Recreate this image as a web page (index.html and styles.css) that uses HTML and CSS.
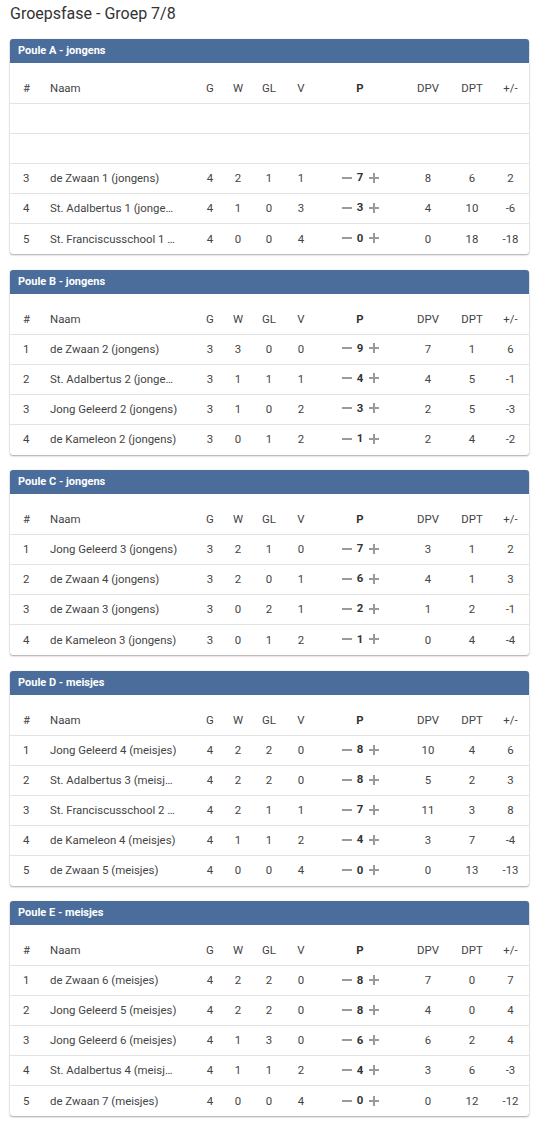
FILE: index.html
```html
<!DOCTYPE html>
<html lang="nl">
<head>
<meta charset="utf-8">
<title>Groepsfase - Groep 7/8</title>
<link rel="stylesheet" href="styles.css">
</head>
<body>
<h1 class="title">Groepsfase - Groep 7/8</h1>

<section class="card">
  <div class="card-head">Poule A - jongens</div>
  <table class="standings">
    <colgroup><col class="c-rank"><col class="c-name"><col class="c-g"><col class="c-w"><col class="c-gl"><col class="c-v"><col class="c-p"><col class="c-dpv"><col class="c-dpt"><col class="c-diff"></colgroup>
    <thead><tr><th class="rank">#</th><th class="name">Naam</th><th>G</th><th>W</th><th>GL</th><th>V</th><th class="pts">P</th><th>DPV</th><th>DPT</th><th>+/-</th></tr></thead>
    <tbody>
      <tr><td class="rank"></td><td class="name"></td><td></td><td></td><td></td><td></td><td></td><td></td><td></td><td></td></tr>
      <tr><td class="rank"></td><td class="name"></td><td></td><td></td><td></td><td></td><td></td><td></td><td></td><td></td></tr>
      <tr><td class="rank">3</td><td class="name">de Zwaan 1 (jongens)</td><td>4</td><td>2</td><td>1</td><td>1</td><td><span class="pbox"><span class="minus"></span><b>7</b><span class="plus"></span></span></td><td>8</td><td>6</td><td>2</td></tr>
      <tr><td class="rank">4</td><td class="name">St. Adalbertus 1 (jongens)</td><td>4</td><td>1</td><td>0</td><td>3</td><td><span class="pbox"><span class="minus"></span><b>3</b><span class="plus"></span></span></td><td>4</td><td>10</td><td>-6</td></tr>
      <tr><td class="rank">5</td><td class="name">St. Franciscusschool 1 (jongens)</td><td>4</td><td>0</td><td>0</td><td>4</td><td><span class="pbox"><span class="minus"></span><b>0</b><span class="plus"></span></span></td><td>0</td><td>18</td><td>-18</td></tr>
    </tbody>
  </table>
</section>

<section class="card">
  <div class="card-head">Poule B - jongens</div>
  <table class="standings">
    <colgroup><col class="c-rank"><col class="c-name"><col class="c-g"><col class="c-w"><col class="c-gl"><col class="c-v"><col class="c-p"><col class="c-dpv"><col class="c-dpt"><col class="c-diff"></colgroup>
    <thead><tr><th class="rank">#</th><th class="name">Naam</th><th>G</th><th>W</th><th>GL</th><th>V</th><th class="pts">P</th><th>DPV</th><th>DPT</th><th>+/-</th></tr></thead>
    <tbody>
      <tr><td class="rank">1</td><td class="name">de Zwaan 2 (jongens)</td><td>3</td><td>3</td><td>0</td><td>0</td><td><span class="pbox"><span class="minus"></span><b>9</b><span class="plus"></span></span></td><td>7</td><td>1</td><td>6</td></tr>
      <tr><td class="rank">2</td><td class="name">St. Adalbertus 2 (jongens)</td><td>3</td><td>1</td><td>1</td><td>1</td><td><span class="pbox"><span class="minus"></span><b>4</b><span class="plus"></span></span></td><td>4</td><td>5</td><td>-1</td></tr>
      <tr><td class="rank">3</td><td class="name">Jong Geleerd 2 (jongens)</td><td>3</td><td>1</td><td>0</td><td>2</td><td><span class="pbox"><span class="minus"></span><b>3</b><span class="plus"></span></span></td><td>2</td><td>5</td><td>-3</td></tr>
      <tr><td class="rank">4</td><td class="name">de Kameleon 2 (jongens)</td><td>3</td><td>0</td><td>1</td><td>2</td><td><span class="pbox"><span class="minus"></span><b>1</b><span class="plus"></span></span></td><td>2</td><td>4</td><td>-2</td></tr>
    </tbody>
  </table>
</section>

<section class="card">
  <div class="card-head">Poule C - jongens</div>
  <table class="standings">
    <colgroup><col class="c-rank"><col class="c-name"><col class="c-g"><col class="c-w"><col class="c-gl"><col class="c-v"><col class="c-p"><col class="c-dpv"><col class="c-dpt"><col class="c-diff"></colgroup>
    <thead><tr><th class="rank">#</th><th class="name">Naam</th><th>G</th><th>W</th><th>GL</th><th>V</th><th class="pts">P</th><th>DPV</th><th>DPT</th><th>+/-</th></tr></thead>
    <tbody>
      <tr><td class="rank">1</td><td class="name">Jong Geleerd 3 (jongens)</td><td>3</td><td>2</td><td>1</td><td>0</td><td><span class="pbox"><span class="minus"></span><b>7</b><span class="plus"></span></span></td><td>3</td><td>1</td><td>2</td></tr>
      <tr><td class="rank">2</td><td class="name">de Zwaan 4 (jongens)</td><td>3</td><td>2</td><td>0</td><td>1</td><td><span class="pbox"><span class="minus"></span><b>6</b><span class="plus"></span></span></td><td>4</td><td>1</td><td>3</td></tr>
      <tr><td class="rank">3</td><td class="name">de Zwaan 3 (jongens)</td><td>3</td><td>0</td><td>2</td><td>1</td><td><span class="pbox"><span class="minus"></span><b>2</b><span class="plus"></span></span></td><td>1</td><td>2</td><td>-1</td></tr>
      <tr><td class="rank">4</td><td class="name">de Kameleon 3 (jongens)</td><td>3</td><td>0</td><td>1</td><td>2</td><td><span class="pbox"><span class="minus"></span><b>1</b><span class="plus"></span></span></td><td>0</td><td>4</td><td>-4</td></tr>
    </tbody>
  </table>
</section>

<section class="card">
  <div class="card-head">Poule D - meisjes</div>
  <table class="standings">
    <colgroup><col class="c-rank"><col class="c-name"><col class="c-g"><col class="c-w"><col class="c-gl"><col class="c-v"><col class="c-p"><col class="c-dpv"><col class="c-dpt"><col class="c-diff"></colgroup>
    <thead><tr><th class="rank">#</th><th class="name">Naam</th><th>G</th><th>W</th><th>GL</th><th>V</th><th class="pts">P</th><th>DPV</th><th>DPT</th><th>+/-</th></tr></thead>
    <tbody>
      <tr><td class="rank">1</td><td class="name">Jong Geleerd 4 (meisjes)</td><td>4</td><td>2</td><td>2</td><td>0</td><td><span class="pbox"><span class="minus"></span><b>8</b><span class="plus"></span></span></td><td>10</td><td>4</td><td>6</td></tr>
      <tr><td class="rank">2</td><td class="name">St. Adalbertus 3 (meisjes)</td><td>4</td><td>2</td><td>2</td><td>0</td><td><span class="pbox"><span class="minus"></span><b>8</b><span class="plus"></span></span></td><td>5</td><td>2</td><td>3</td></tr>
      <tr><td class="rank">3</td><td class="name">St. Franciscusschool 2 (meisjes)</td><td>4</td><td>2</td><td>1</td><td>1</td><td><span class="pbox"><span class="minus"></span><b>7</b><span class="plus"></span></span></td><td>11</td><td>3</td><td>8</td></tr>
      <tr><td class="rank">4</td><td class="name">de Kameleon 4 (meisjes)</td><td>4</td><td>1</td><td>1</td><td>2</td><td><span class="pbox"><span class="minus"></span><b>4</b><span class="plus"></span></span></td><td>3</td><td>7</td><td>-4</td></tr>
      <tr><td class="rank">5</td><td class="name">de Zwaan 5 (meisjes)</td><td>4</td><td>0</td><td>0</td><td>4</td><td><span class="pbox"><span class="minus"></span><b>0</b><span class="plus"></span></span></td><td>0</td><td>13</td><td>-13</td></tr>
    </tbody>
  </table>
</section>

<section class="card">
  <div class="card-head">Poule E - meisjes</div>
  <table class="standings">
    <colgroup><col class="c-rank"><col class="c-name"><col class="c-g"><col class="c-w"><col class="c-gl"><col class="c-v"><col class="c-p"><col class="c-dpv"><col class="c-dpt"><col class="c-diff"></colgroup>
    <thead><tr><th class="rank">#</th><th class="name">Naam</th><th>G</th><th>W</th><th>GL</th><th>V</th><th class="pts">P</th><th>DPV</th><th>DPT</th><th>+/-</th></tr></thead>
    <tbody>
      <tr><td class="rank">1</td><td class="name">de Zwaan 6 (meisjes)</td><td>4</td><td>2</td><td>2</td><td>0</td><td><span class="pbox"><span class="minus"></span><b>8</b><span class="plus"></span></span></td><td>7</td><td>0</td><td>7</td></tr>
      <tr><td class="rank">2</td><td class="name">Jong Geleerd 5 (meisjes)</td><td>4</td><td>2</td><td>2</td><td>0</td><td><span class="pbox"><span class="minus"></span><b>8</b><span class="plus"></span></span></td><td>4</td><td>0</td><td>4</td></tr>
      <tr><td class="rank">3</td><td class="name">Jong Geleerd 6 (meisjes)</td><td>4</td><td>1</td><td>3</td><td>0</td><td><span class="pbox"><span class="minus"></span><b>6</b><span class="plus"></span></span></td><td>6</td><td>2</td><td>4</td></tr>
      <tr><td class="rank">4</td><td class="name">St. Adalbertus 4 (meisjes)</td><td>4</td><td>1</td><td>1</td><td>2</td><td><span class="pbox"><span class="minus"></span><b>4</b><span class="plus"></span></span></td><td>3</td><td>6</td><td>-3</td></tr>
      <tr><td class="rank">5</td><td class="name">de Zwaan 7 (meisjes)</td><td>4</td><td>0</td><td>0</td><td>4</td><td><span class="pbox"><span class="minus"></span><b>0</b><span class="plus"></span></span></td><td>0</td><td>12</td><td>-12</td></tr>
    </tbody>
  </table>
</section>
</body>
</html>
```

FILE: styles.css
```css
html, body {
  margin: 0;
  padding: 0;
  background: #fff;
}
body {
  font-family: Roboto, "Liberation Sans", Arial, sans-serif;
  color: #444;
  padding: 0 7px 0 10px;
}
.title {
  margin: 0;
  height: 39px;
  box-sizing: border-box;
  padding-top: 4px;
  font-size: 16px;
  line-height: 20px;
  font-weight: 400;
  color: #333;
}
.card {
  width: 519px;
  background: #fff;
  border-radius: 3px;
  box-shadow: 0 1px 2px rgba(0,0,0,0.35), 0 0 1px rgba(0,0,0,0.12);
  margin-bottom: 15.6px;
  overflow: hidden;
}
.card-head {
  height: 24px;
  line-height: 24px;
  background: #4a6d9b;
  color: #fff;
  font-weight: 700;
  font-size: 11px;
  padding-left: 8px;
}
.standings {
  width: 100%;
  table-layout: fixed;
  border-collapse: separate;
  border-spacing: 0;
  font-size: 11.4px;
  color: #444;
}
.c-rank { width: 40px; }
.c-name { width: 146px; }
.c-g { width: 28px; }
.c-w { width: 28px; }
.c-gl { width: 34px; }
.c-v { width: 30px; }
.c-p { width: 88px; }
.c-dpv { width: 48px; }
.c-dpt { width: 40px; }
.c-diff { width: 37px; }
.standings th {
  height: 41px;
  box-sizing: border-box;
  padding: 0 0 8px;
  vertical-align: bottom;
  font-weight: 400;
  text-align: center;
  line-height: 13px;
  color: #444;
  border-bottom: 1px solid #e2e2e2;
}
.standings th.pts { font-weight: 700; color: #333; }
.standings td {
  height: 30px;
  box-sizing: border-box;
  padding: 0;
  text-align: center;
  vertical-align: middle;
  line-height: 13px;
  border-bottom: 1px solid #e2e2e2;
}
.standings tbody tr:last-child td { border-bottom: none; }
.standings .rank {
  text-align: left;
  padding-left: 13px;
}
.standings .name {
  text-align: left;
  padding-right: 18px;
  white-space: nowrap;
  overflow: hidden;
  text-overflow: ellipsis;
}
.pbox {
  display: inline-flex;
  align-items: center;
  gap: 5px;
}
.pbox b {
  font-weight: 700;
  color: #333;
  min-width: 7px;
  text-align: center;
}
.minus, .plus {
  position: relative;
  display: inline-block;
  width: 10px;
  height: 10px;
}
.minus::before, .plus::before, .plus::after {
  content: "";
  position: absolute;
  background: #9a9a9a;
}
.minus::before, .plus::before {
  left: 0;
  right: 0;
  top: 4px;
  height: 2px;
}
.plus::after {
  top: 0;
  bottom: 0;
  left: 4px;
  width: 2px;
}
```
